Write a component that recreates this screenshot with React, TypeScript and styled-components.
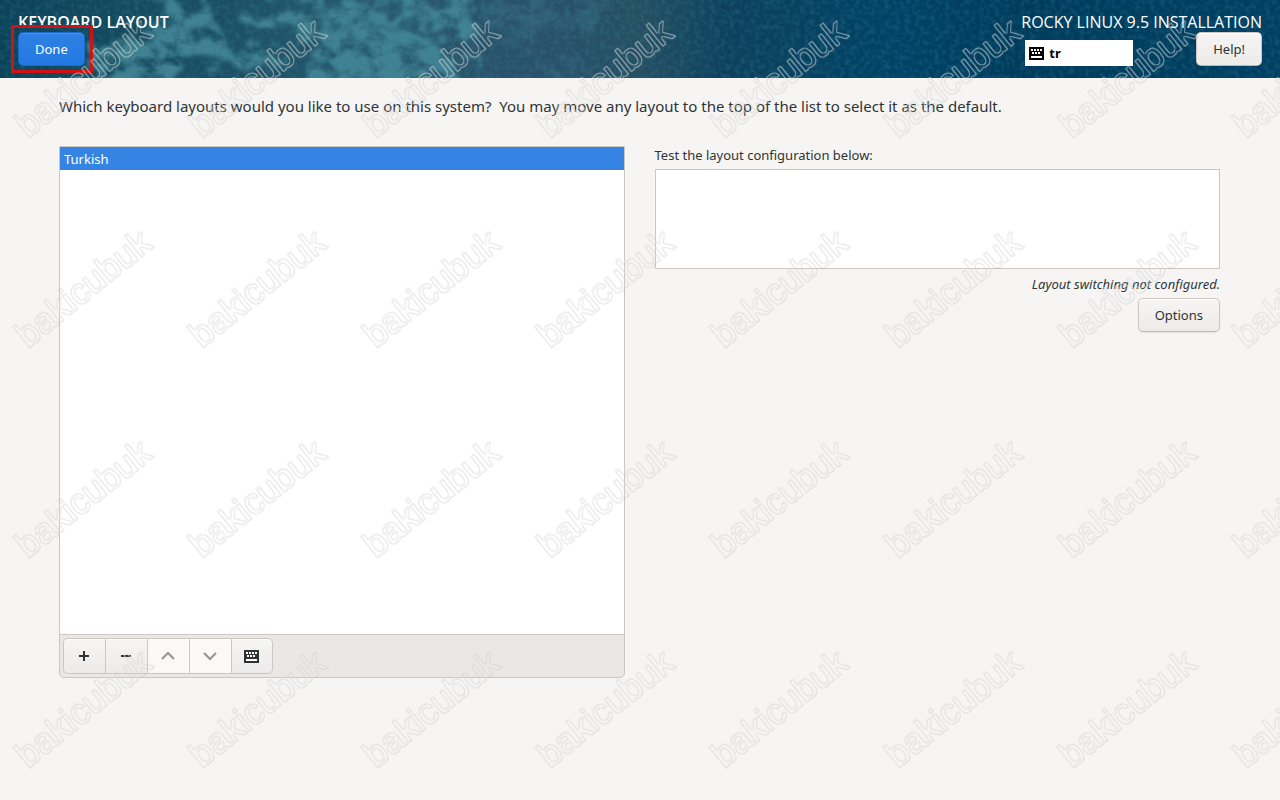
import React from 'react';
import styled, { createGlobalStyle, css } from 'styled-components';

const GlobalStyle = createGlobalStyle`
  * { box-sizing: border-box; }
  body { margin: 0; background: #f6f5f4; color: #2e3436; font: 13px/18px "Noto Sans", "Open Sans", sans-serif; }
  button, textarea, input { font: inherit; color: inherit; }
`;

const Page = styled.div`
  position: relative;
  min-height: 100vh;
  overflow: hidden;
`;

const Header = styled.header`
  position: relative;
  display: flex;
  justify-content: space-between;
  height: 78px;
  padding: 12px 18px;
  background: #003c5c;
  color: #fff;
`;

const Backdrop = styled.svg`
  position: absolute;
  inset: 0;
  width: 100%;
  height: 100%;
`;

const HeaderSide = styled.div`
  position: relative;
  display: flex;
  flex-direction: column;
  align-items: flex-start;
`;

const Title = styled.h1<{ $light?: boolean }>`
  margin: 0;
  font-family: "Open Sans", "Noto Sans", sans-serif;
  font-size: 16px;
  line-height: 20px;
  font-weight: ${p => (p.$light ? 400 : 600)};
  white-space: nowrap;
`;

const HeaderTools = styled.div`
  display: flex;
  align-self: stretch;
  align-items: flex-start;
  justify-content: space-between;
  padding-left: 4px;
`;

const Indicator = styled.button`
  display: flex;
  align-items: center;
  gap: 5px;
  width: 108px;
  height: 26px;
  margin: 8px 0 0;
  padding: 0 4px;
  border: 0;
  background: #fff;
  color: #000;
  font-weight: 700;
`;

const Button = styled.button<{ $primary?: boolean }>`
  height: 34px;
  padding: 0 16px;
  border: 1px solid #cdc7c2;
  border-bottom-color: #bfb8b1;
  border-radius: 5px;
  background: linear-gradient(to bottom, #f6f5f4, #edebe9);
  box-shadow: inset 0 1px #fff, 0 1px 2px rgba(0, 0, 0, 0.07);
  color: #2e3436;
  ${p => p.$primary && css`
    border-color: #1b6acb;
    background: linear-gradient(to bottom, #2f80e3, #2379e2);
    box-shadow: inset 0 1px rgba(255, 255, 255, 0.15);
    color: #fff;
  `}
`;

const Highlight = styled.span`
  position: absolute;
  left: -7px;
  top: 13px;
  width: 82px;
  height: 48px;
  border: 3px solid #cf1214;
  pointer-events: none;
`;

const Main = styled.main`
  padding: 16px 60px 0 59px;
`;

const Question = styled.p`
  margin: 0;
  font-size: 15px;
  line-height: 24px;
  white-space: pre-wrap;
`;

const Columns = styled.div`
  display: grid;
  grid-template-columns: 1fr 1fr;
  gap: 30px;
  margin-top: 28px;
`;

const LayoutPanel = styled.section`
  display: flex;
  flex-direction: column;
  height: calc(100vh - 268px);
  min-height: 240px;
  border: 1px solid #cdc7c2;
  border-radius: 0 0 5px 5px;
  background: #ebe7e4;
  overflow: hidden;
`;

const LayoutList = styled.ul`
  flex: 1;
  margin: 0;
  padding: 0;
  list-style: none;
  background: #fff;
`;

const LayoutRow = styled.li`
  height: 23px;
  padding: 3px 4px;
  background: #3584e4;
  color: #fff;
`;

const Toolbar = styled.div`
  display: flex;
  padding: 3px;
  border-top: 1px solid #cdc7c2;
`;

const ToolButton = styled.button`
  display: grid;
  place-items: center;
  width: 42px;
  height: 36px;
  padding: 0 1px 0 0;
  border: 1px solid #cdc7c2;
  border-right-width: 0;
  background: linear-gradient(to bottom, #f6f5f4, #edebe9);
  box-shadow: inset 0 1px #fff;
  &:first-child { border-radius: 5px 0 0 5px; }
  &:last-child { border-right-width: 1px; border-radius: 0 5px 5px 0; }
  &:disabled { background: #faf9f8; color: #929595; }
`;

const TestArea = styled.section`
  display: flex;
  flex-direction: column;
  align-items: flex-end;
`;

const TestLabel = styled.label`
  align-self: stretch;
  margin-bottom: 5px;
`;

const TestInput = styled.textarea`
  display: block;
  width: 100%;
  height: 100px;
  border: 1px solid #cdc7c2;
  background: #fff;
  resize: none;
  outline: none;
`;

const Status = styled.p`
  margin: 6px 0 5px;
  font-style: italic;
`;

const Watermark = styled.svg`
  position: absolute;
  inset: 0;
  width: 100%;
  height: 100%;
  pointer-events: none;
  font-family: "Liberation Sans", sans-serif;
  font-size: 36px;
`;

const KeyboardIcon = () => (
  <svg width="15" height="13" viewBox="0 0 15 13" shapeRendering="crispEdges" aria-hidden="true">
    <rect width="15" height="13" rx="1" fill="currentColor" />
    <path
      fill="#fff"
      d="M2 2h2v2H2zM5 2h2v2H5zM8 2h2v2H8zM11 2h2v2h-2zM3 5h2v2H3zM6 5h2v2H6zM9 5h2v2H9zM2 9h11v2H2z"
    />
  </svg>
);

const LineIcon = ({ d }: { d: string }) => (
  <svg width="16" height="16" viewBox="0 0 16 16" fill="none" stroke="currentColor" strokeWidth="2" aria-hidden="true">
    <path d={d} />
  </svg>
);

const HeaderBackdrop = () => (
  <Backdrop aria-hidden="true" preserveAspectRatio="none" viewBox="0 0 1280 78">
    <defs>
      <linearGradient id="sea">
        <stop offset="0" stopColor="#0c4259" />
        <stop offset="0.12" stopColor="#174b60" />
        <stop offset="0.3" stopColor="#28586e" />
        <stop offset="0.42" stopColor="#2a5069" />
        <stop offset="0.5" stopColor="#264f62" />
        <stop offset="0.57" stopColor="#0d405d" />
        <stop offset="0.7" stopColor="#004266" />
        <stop offset="0.8" stopColor="#003b5c" />
        <stop offset="1" stopColor="#003f62" />
      </linearGradient>
      <filter id="land" x="-10%" y="-30%" width="120%" height="160%" colorInterpolationFilters="sRGB">
        <feTurbulence type="fractalNoise" baseFrequency="0.04" numOctaves="6" seed="8" result="n" />
        <feDisplacementMap in="SourceGraphic" in2="n" scale="70" xChannelSelector="R" yChannelSelector="G" result="d" />
        <feGaussianBlur in="d" stdDeviation="2" result="b" />
        <feTurbulence type="fractalNoise" baseFrequency="0.05 0.07" numOctaves="6" seed="3" />
        <feColorMatrix values="0 0 0 0 0  0 0 0 0 0  0 0 0 0 0  2.6 0 0 0 -0.5" result="m" />
        <feComposite in="b" in2="m" operator="in" />
      </filter>
      <filter id="grain" x="0" y="0" width="100%" height="100%" colorInterpolationFilters="sRGB">
        <feTurbulence type="fractalNoise" baseFrequency="0.2" numOctaves="3" seed="5" />
        <feColorMatrix values="0 0 0 0 0.2  0 0 0 0 0.55  0 0 0 0 0.62  0 1.4 0 0 -0.56" />
      </filter>
    </defs>
    <rect width="1280" height="78" fill="url(#sea)" />
    <g filter="url(#land)" fill="#418291">
      <path d="M85 85 95 50 135 25 190 45 175 85zM150 0H200L215 35 300 65 210 70 175 45zM235 5 300 0 310 40 260 30zM305 90 320 30 380 30 440 40 480 85zM290 0H470L480 35 400 25 320 28z" />
      <path d="M480 0H620L560 40 500 30zM510 45 560 60 600 85 540 75z" opacity="0.3" />
    </g>
    <rect width="1280" height="78" filter="url(#grain)" opacity="0.45" />
  </Backdrop>
);

const STEP_X = 174;
const STEP_Y = 210;
const ROWS = [0, 1, 2, 3];
const COLS = [0, 1, 2, 3, 4, 5, 6, 7];

const WatermarkLayer = () => (
  <Watermark aria-hidden="true">
    <defs>
      <filter id="outline" filterUnits="userSpaceOnUse" x="0" y="0" width="100%" height="100%" colorInterpolationFilters="sRGB">
        <feMorphology in="SourceAlpha" operator="erode" radius="1" result="inner" />
        <feComposite in="SourceGraphic" in2="inner" operator="out" result="ring" />
        <feOffset in="ring" dx="1" dy="1" />
        <feColorMatrix values="0 0 0 0 0.45  0 0 0 0 0.45  0 0 0 0 0.45  0 0 0 0.14 0" result="shade" />
        <feColorMatrix in="ring" values="0 0 0 0 0.93  0 0 0 0 0.93  0 0 0 0 0.93  0 0 0 0.45 0" result="line" />
        <feMerge>
          <feMergeNode in="shade" />
          <feMergeNode in="line" />
        </feMerge>
      </filter>
    </defs>
    <g filter="url(#outline)" fill="#fff" stroke="#fff" strokeWidth="2" strokeLinejoin="round">
      {ROWS.map(r =>
        COLS.map(c => (
          <text key={`${r}-${c}`} transform={`translate(${27 + c * STEP_X} ${138 + r * STEP_Y}) rotate(-39)`}>
            bakicubuk
          </text>
        )),
      )}
    </g>
  </Watermark>
);

export default function App() {
  return (
    <Page>
      <GlobalStyle />
      <Header>
        <HeaderBackdrop />
        <HeaderSide>
          <Title>KEYBOARD LAYOUT</Title>
          <Button $primary>Done</Button>
          <Highlight />
        </HeaderSide>
        <HeaderSide>
          <Title as="div" $light>ROCKY LINUX 9.5 INSTALLATION</Title>
          <HeaderTools>
            <Indicator><KeyboardIcon />tr</Indicator>
            <Button>Help!</Button>
          </HeaderTools>
        </HeaderSide>
      </Header>
      <Main>
        <Question>{'Which keyboard layouts would you like to use on this system?  You may move any layout to the top of the list to select it as the default.'}</Question>
        <Columns>
          <LayoutPanel>
            <LayoutList><LayoutRow>Turkish</LayoutRow></LayoutList>
            <Toolbar>
              <ToolButton aria-label="Add layout"><LineIcon d="M8 3v10M3 8h10" /></ToolButton>
              <ToolButton aria-label="Remove layout"><LineIcon d="M3 8h10" /></ToolButton>
              <ToolButton aria-label="Move up" disabled><LineIcon d="M2 11 8 5l6 6" /></ToolButton>
              <ToolButton aria-label="Move down" disabled><LineIcon d="M2 5l6 6 6-6" /></ToolButton>
              <ToolButton aria-label="Preview layout"><KeyboardIcon /></ToolButton>
            </Toolbar>
          </LayoutPanel>
          <TestArea>
            <TestLabel htmlFor="test">Test the layout configuration below:</TestLabel>
            <TestInput id="test" />
            <Status>Layout switching not configured.</Status>
            <Button>Options</Button>
          </TestArea>
        </Columns>
      </Main>
      <WatermarkLayer />
    </Page>
  );
}
